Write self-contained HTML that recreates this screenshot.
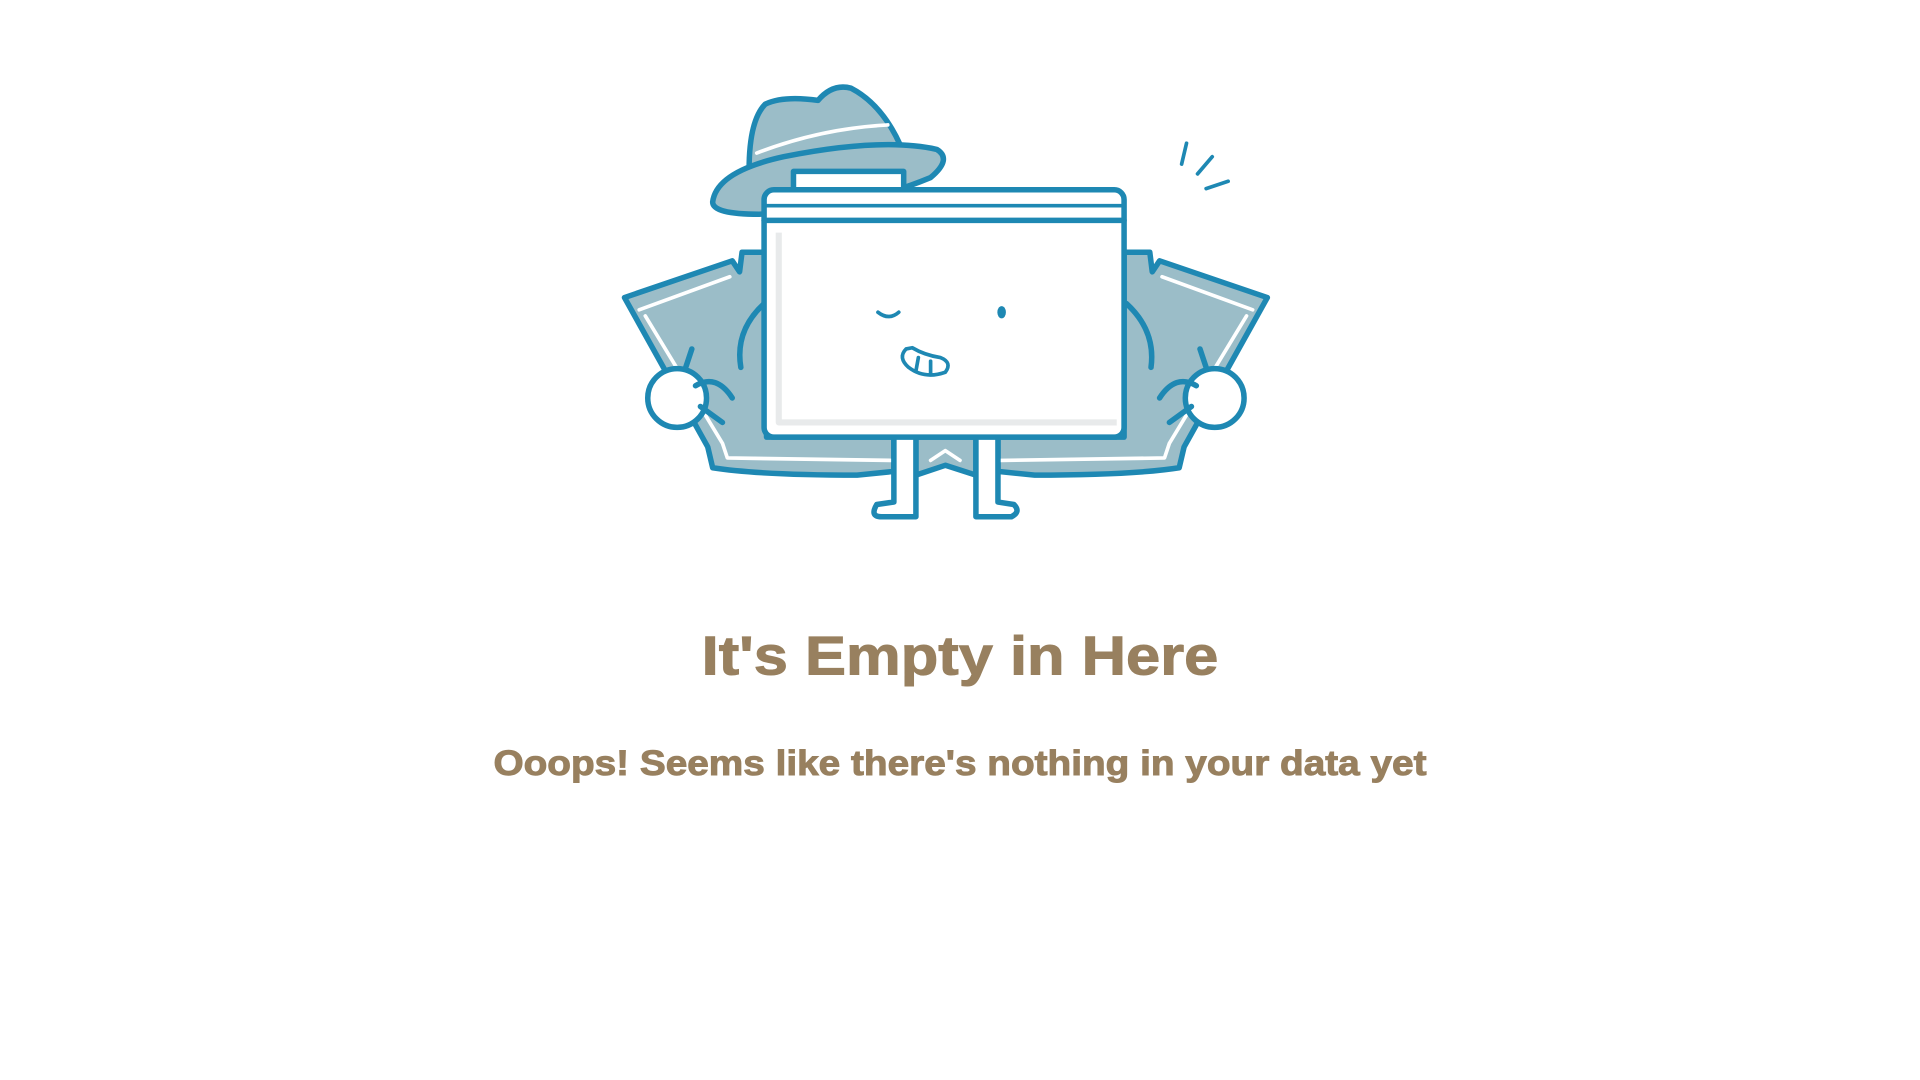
<!DOCTYPE html>
<html><head><meta charset="utf-8"><style>
html,body{margin:0;padding:0;background:#fff;width:1920px;height:1080px;overflow:hidden}
svg{display:block}
</style></head><body>
<svg width="1920" height="1080" viewBox="0 0 1568 882" xmlns="http://www.w3.org/2000/svg">
<g stroke="#1e88b3" stroke-width="4.5" stroke-linejoin="round" stroke-linecap="round">
<path d="M510,243 L598,213 L604,222 L606,206 L626,206 L626,357 L730,357 L730,385 L700,388 Q620,388 582,382 L578,365 Z" fill="#9bbdc8"/>
<path d="M1035,243 L947,213 L941,222 L939,206 L918,206 L918,357 L815,357 L815,385 L845,388 Q925,388 963,382 L967,365 Z" fill="#9bbdc8"/>
<path d="M748,357 L797,357 L797,388 L772,380 L748,388 Z" fill="#9bbdc8"/>
<path d="M522,253 L596,226 M527,258 L590,362 L594,374 L728,376 M1023,253 L949,226 M1018,258 L955,362 L951,374 L817,376 M760,376 L772,368 L784,376" fill="none" stroke="#fff" stroke-width="3"/>
<path d="M624,248 Q600,270 605,300 M920,248 Q944,270 940,300 M565,285 L560,300 M980,285 L985,300" fill="none"/>
<circle cx="553" cy="325" r="24" fill="#fff"/>
<path d="M568,315 Q585,305 598,325 M572,332 L590,345" fill="none"/>
<circle cx="992" cy="325" r="24" fill="#fff"/>
<path d="M977,315 Q960,305 947,325 M973,332 L955,345" fill="none"/>
<path d="M730,355 L730,410 L716,412 Q710,422 720,422 L748,422 L748,355" fill="#fff"/>
<path d="M797,355 L797,422 L826,422 Q834,418 828,412 L815,410 L815,355" fill="#fff"/>
<path d="M612,150 Q610,100 625,85 Q640,78 668,82 Q680,68 695,72 Q720,85 735,118" fill="#9bbdc8"/>
<path d="M582,165 Q585,140 640,128 Q720,112 765,122 Q778,130 760,145 Q700,170 620,175 Q582,175 582,165 Z" fill="#9bbdc8"/>
<path d="M618,125 Q670,105 725,102" fill="none" stroke="#fff" stroke-width="3"/>
<path d="M648,155 L648,140 L738,140 L738,155 Z" fill="#fff"/>
<rect x="624" y="155" width="294" height="202" rx="8" fill="#fff"/>
<path d="M636,190 L636,345 L912,345" fill="none" stroke="#e8eaeb" stroke-width="5" stroke-linecap="butt"/>
<line x1="624" y1="168" x2="918" y2="168" stroke-width="3"/>
<line x1="624" y1="180" x2="918" y2="180"/>
<path d="M717,255 Q726,262 734,255" fill="none" stroke-width="3"/>
<ellipse cx="818" cy="255" rx="3.5" ry="5" fill="#1e88b3" stroke="none"/>
<path d="M740,285 Q733,292 742,300 Q755,310 772,304 Q778,296 768,292 Q755,290 745,284 Z" fill="#fff" stroke-width="3"/>
<path d="M750,292 L748,303 M760,295 L760,306" fill="none" stroke-width="3"/>
<path d="M969,117 L965,134 M990,128 L978,142 M1003,148 L985,154" fill="none" stroke-width="3"/>
</g>
<g font-family="Liberation Sans, sans-serif" font-weight="bold" fill="#98805f" text-anchor="middle" stroke="#98805f" stroke-width="0.8">
<text x="784" y="551" font-size="45" textLength="422" lengthAdjust="spacingAndGlyphs">It's Empty in Here</text>
<text x="784" y="633" font-size="29" textLength="762" lengthAdjust="spacingAndGlyphs">Ooops! Seems like there's nothing in your data yet</text>
</g>
</svg>
</body></html>
